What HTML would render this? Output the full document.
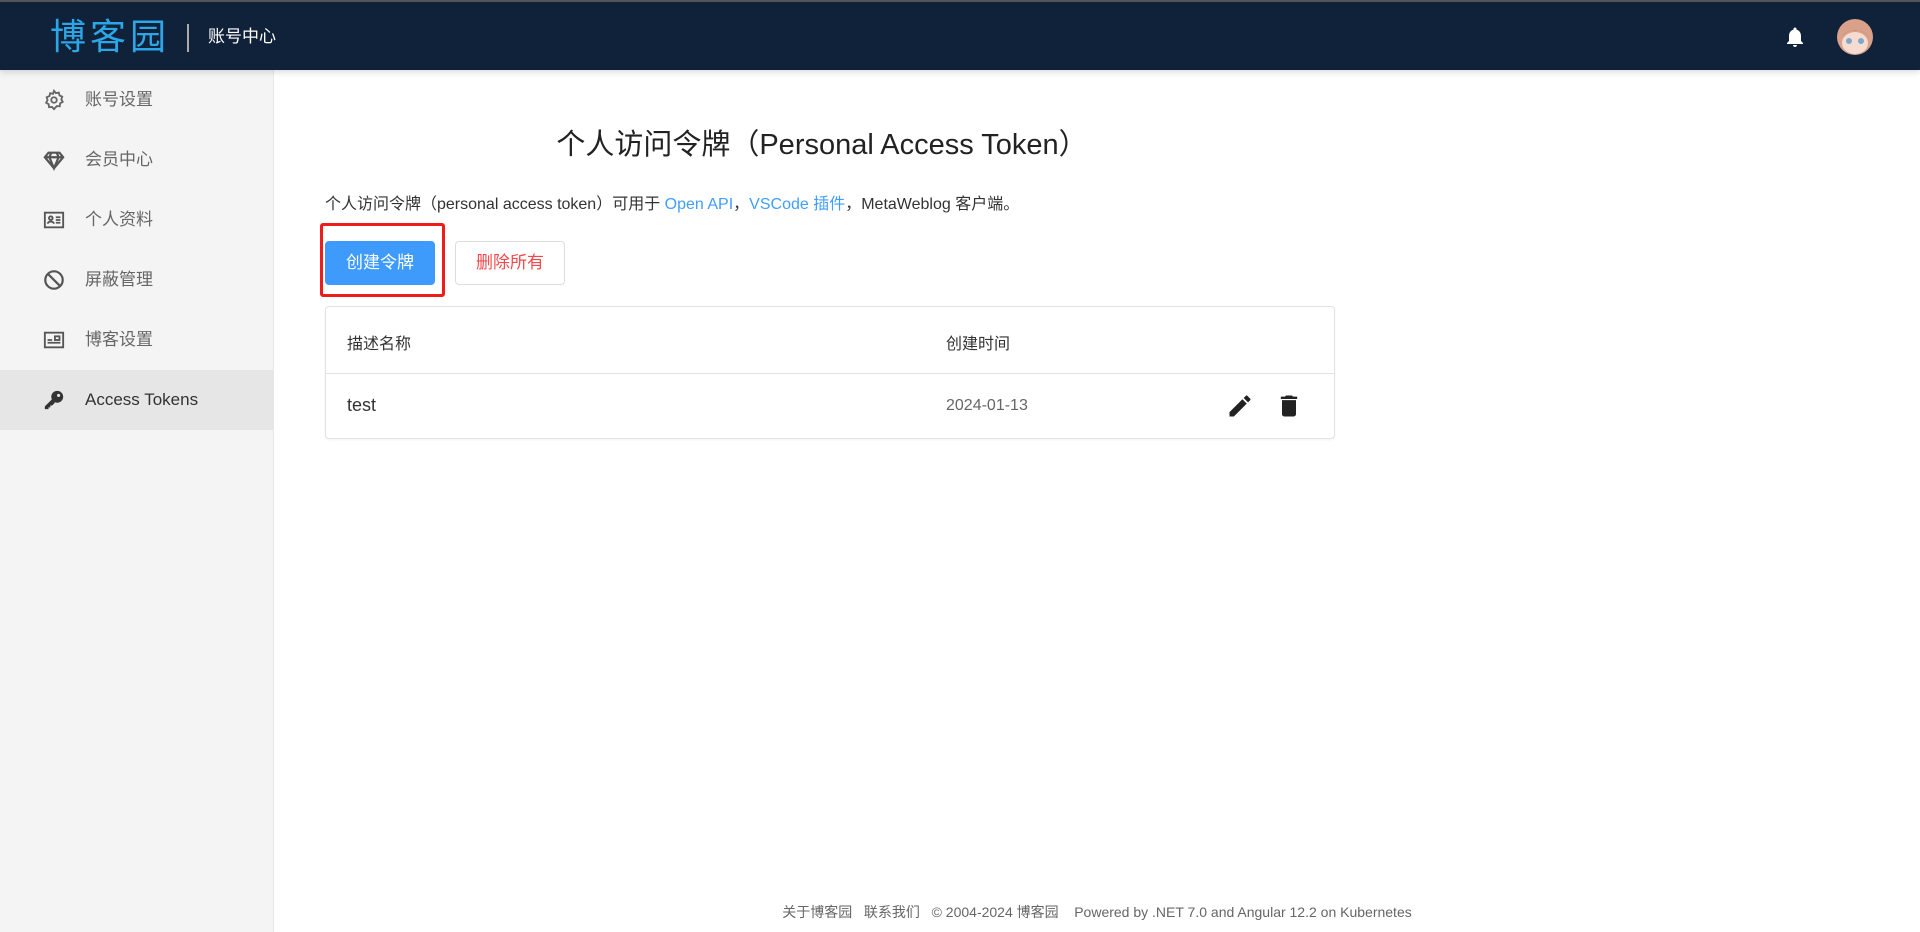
<!DOCTYPE html>
<html><head><meta charset="utf-8">
<style>
*{box-sizing:border-box;margin:0;padding:0}
body{width:1920px;height:932px;overflow:hidden;background:#fff;font-family:"Liberation Sans","Noto Sans CJK SC",sans-serif;position:relative;color:#333}
.hdr{position:absolute;left:0;top:0;width:1920px;height:70px;background:#10213a;border-top:2px solid #555;box-shadow:0 2px 6px rgba(0,0,0,.15);z-index:2}
.logo{position:absolute;left:50px;top:15px;font-size:36px;color:#2ca6e6;letter-spacing:4px;line-height:40px}
.div{position:absolute;left:187px;top:22px;width:2px;height:28px;background:#aaa}
.sub{position:absolute;left:208px;top:20px;font-size:17px;color:#fff}
.side{position:absolute;left:0;top:70px;width:274px;height:862px;background:#f4f4f4;border-right:1px solid #e8e8e8}
.it{position:absolute;left:0;width:274px;height:60px;font-size:17px;color:#666;line-height:60px;padding-left:85px}
.it svg{position:absolute;left:43px;top:19px}
.act{background:#e6e6e6;color:#333}
.title{position:absolute;left:0;width:1644px;top:121px;text-align:center;font-size:29px;color:#222}
.desc{position:absolute;left:325px;top:190px;font-size:16px;color:#333}
.desc a{color:#409eff;text-decoration:none}
.red{position:absolute;left:320px;top:223px;width:125px;height:74px;border:3px solid #f01c1c;border-radius:3px}
.b1{position:absolute;left:325px;top:241px;width:110px;height:44px;background:#3e9bfb;border-radius:4px;color:#fff;font-size:17px;text-align:center;line-height:44px}
.b2{position:absolute;left:455px;top:241px;width:110px;height:44px;border:1px solid #ddd;border-radius:4px;color:#f5484b;font-size:17px;text-align:center;line-height:42px}
.tbl{position:absolute;left:325px;top:306px;width:1010px;height:133px;border:1px solid #e2e2e2;border-radius:4px;box-shadow:0 1px 2px rgba(0,0,0,.05)}
.hl{position:absolute;left:0;top:66px;width:100%;height:1px;background:#e2e2e2}
.t{position:absolute;font-size:16px}
.foot{position:absolute;top:902px;left:274px;width:1646px;text-align:center;font-size:14px;color:#666}
</style></head><body>
<div class="hdr">
<div class="logo">博客园</div><div class="div"></div><div class="sub">账号中心</div>
<svg style="position:absolute;left:1783px;top:22px" width="24" height="26" viewBox="0 0 24 24"><path fill="#fff" d="M12 22c1.1 0 2-.9 2-2h-4c0 1.1.9 2 2 2zm6-6v-5c0-3.070-1.64-5.64-4.5-6.32V4c0-.83-.67-1.5-1.5-1.5s-1.5.67-1.5 1.5v.68C7.63 5.36 6 7.92 6 11v5l-2 2v1h16v-1l-2-2z"/></svg>
<svg style="position:absolute;left:1837px;top:17px" width="36" height="36" viewBox="0 0 36 36"><circle cx="18" cy="18" r="18" fill="#d9a08a"/><ellipse cx="18" cy="24" rx="13" ry="11" fill="#f6dcd0"/><circle cx="12" cy="22" r="3" fill="#7fa7cc"/><circle cx="24" cy="22" r="3" fill="#7fa7cc"/><path d="M4 18 Q18 4 32 18 Q26 10 18 12 Q10 10 4 18z" fill="#c98a72"/></svg>
</div>
<div class="side">
<div class="it" style="top:0"><svg width="22" height="22" viewBox="0 0 24 24" fill="none" stroke="#666" stroke-width="2"><circle cx="12" cy="12" r="3"/><path d="M12 2l2 2.5 3.2-.6.8 3.1 3 1.3-1 3 1.5 2.8-2.8 1.5-.4 3.2-3.2-.2L12 22l-2.2-2.4-3.2.2-.4-3.2L3.4 15 5 12 4 9l3-1.3.8-3.1 3.2.6z"/></svg>账号设置</div>
<div class="it" style="top:60px"><svg width="22" height="22" viewBox="0 0 24 24" fill="none" stroke="#555" stroke-width="2.4"><path d="M6 4h12l4 5-10 12L2 9z M2 9h20 M9 4l-2 5 5 12 5-12-2-5"/></svg>会员中心</div>
<div class="it" style="top:120px"><svg width="22" height="22" viewBox="0 0 24 24" fill="none" stroke="#555" stroke-width="2"><rect x="2" y="4" width="20" height="16"/><circle cx="8.5" cy="10" r="2"/><path d="M5 16c1-3 6-3 7 0M14 9h5M14 12h5M14 15h5"/></svg>个人资料</div>
<div class="it" style="top:180px"><svg width="22" height="22" viewBox="0 0 24 24" fill="none" stroke="#555" stroke-width="2.4"><circle cx="12" cy="12" r="9.5"/><path d="M5.5 5.5l13 13"/></svg>屏蔽管理</div>
<div class="it" style="top:240px"><svg width="22" height="22" viewBox="0 0 24 24" fill="none" stroke="#555" stroke-width="2"><rect x="2" y="4" width="20" height="16"/><rect x="13" y="8" width="5" height="4"/><path d="M5 12h5M5 15h14"/></svg>博客设置</div>
<div class="it act" style="top:300px"><svg width="22" height="22" viewBox="0 0 24 24"><circle cx="15.5" cy="8.5" r="6.5" fill="#333"/><circle cx="17" cy="7" r="1.7" fill="#e6e6e6"/><path d="M10 11L2 19v3h4v-2h2v-2h2l3-3z" fill="#333"/></svg>Access Tokens</div>
</div>
<div class="title">个人访问令牌（Personal Access Token）</div>
<div class="desc">个人访问令牌（personal access token）可用于 <a>Open API</a>，<a>VSCode 插件</a>，MetaWeblog 客户端。</div>
<div class="red"></div>
<div class="b1">创建令牌</div>
<div class="b2">删除所有</div>
<div class="tbl">
<div class="t" style="left:21px;top:23px">描述名称</div>
<div class="t" style="left:620px;top:23px">创建时间</div>
<div class="hl"></div>
<div class="t" style="left:21px;top:88px;font-size:18px">test</div>
<div class="t" style="left:620px;top:90px;color:#666">2024-01-13</div>
<svg style="position:absolute;left:900px;top:85px" width="28" height="28" viewBox="0 0 24 24"><path fill="#222" d="M3 17.25V21h3.750L17.81 9.94l-3.75-3.75L3 17.25zM20.71 7.04a1 1 0 000-1.41l-2.34-2.34a1 1 0 00-1.41 0l-1.83 1.83 3.75 3.75 1.83-1.83z"/></svg>
<svg style="position:absolute;left:949px;top:85px" width="28" height="28" viewBox="0 0 24 24"><path fill="#222" d="M6 19c0 1.1.9 2 2 2h8c1.1 0 2-.9 2-2V7H6v12zM19 4h-3.5l-1-1h-5l-1 1H5v2h14V4z"/></svg>
</div>
<div class="foot">关于博客园&nbsp;&nbsp;&nbsp;联系我们&nbsp;&nbsp;&nbsp;© 2004-2024 博客园&nbsp;&nbsp;&nbsp;&nbsp;Powered by .NET 7.0 and Angular 12.2 on Kubernetes</div>
</body></html>
